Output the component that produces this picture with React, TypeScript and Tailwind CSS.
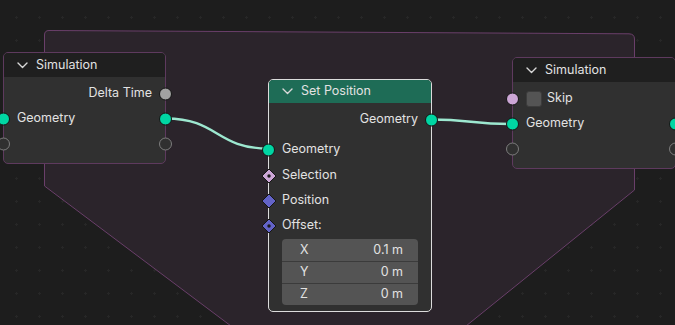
import React from 'react';

type SocketKind = 'geo' | 'float' | 'bool' | 'boolField' | 'vec' | 'vecField' | 'empty';

function Socket({ kind, side }: { kind: SocketKind; side: 'left' | 'right' }) {
    const pos = side === 'left' ? 'left-[-7px]' : 'right-[-7px]';
    if (kind === 'empty') {
        return <span className={`absolute ${pos} top-1/2 -translate-y-1/2 w-[13px] h-[13px] rounded-full border-[1.5px] border-[#7d7d7d] bg-[#303030]`} />;
    }
    if (kind === 'geo') {
        return <span className={`absolute ${pos} top-1/2 -translate-y-1/2 w-[13px] h-[13px] rounded-full border border-[#151515] bg-[#00d6a3]`} />;
    }
    if (kind === 'float') {
        return <span className={`absolute ${pos} top-1/2 -translate-y-1/2 w-[13px] h-[13px] rounded-full border border-[#151515] bg-[#a1a1a1]`} />;
    }
    if (kind === 'bool') {
        return <span className={`absolute ${pos} top-1/2 -translate-y-1/2 w-[13px] h-[13px] rounded-full border border-[#151515] bg-[#cca6d6]`} />;
    }
    const fill = kind === 'boolField' ? '#cca6d6' : '#6363c7';
    const dot = kind === 'boolField' || kind === 'vecField';
    return (
        <svg className={`absolute ${side === 'left' ? 'left-[-8px]' : 'right-[-8px]'} top-1/2 -translate-y-1/2`} width="16" height="16" viewBox="0 0 16 16">
            <path d="M8 1 L15 8 L8 15 L1 8 Z" fill={fill} stroke="#151515" strokeWidth="1" />
            {dot && <circle cx="8" cy="8" r="1.7" fill="#1a1a1a" />}
        </svg>
    );
}

function Row({ children, left, right, align = 'left' }: { children?: React.ReactNode; left?: SocketKind; right?: SocketKind; align?: 'left' | 'right' }) {
    return (
        <div className={`relative h-[25px] flex items-center px-[13px] ${align === 'right' ? 'justify-end' : 'justify-start'}`}>
            {left && <Socket kind={left} side="left" />}
            {children}
            {right && <Socket kind={right} side="right" />}
        </div>
    );
}

function Chevron() {
    return (
        <svg width="11" height="7" viewBox="0 0 11 7" className="mr-[8px]">
            <path d="M1 1 L5.5 5.5 L10 1" fill="none" stroke="#d8d8d8" strokeWidth="1.4" strokeLinecap="round" strokeLinejoin="round" />
        </svg>
    );
}

function Header({ title, className }: { title: string; className: string }) {
    return (
        <div className={`flex items-center pl-[13px] text-[12.5px] text-[#e2e2e2] ${className}`}>
            <Chevron />
            <span>{title}</span>
        </div>
    );
}

export default function App() {
    return (
        <div
            className="relative w-[675px] h-[325px] overflow-hidden bg-[#1d1d1d] bg-[radial-gradient(circle,#272727_1px,transparent_1.3px)] bg-[size:23px_23px] bg-[position:5px_6px] text-[12.5px] text-[#e2e2e2]"
            style={{ fontFamily: 'Inter, "Noto Sans", sans-serif' }}
        >
            {/* simulation zone */}
            <svg className="absolute inset-0" width="675" height="325" viewBox="0 0 675 325">
                <path
                    d="M44.5 186 L44.5 35 Q44.5 30.5 49 30.5 L629 33.8 Q634.5 34 634.5 39 L634.5 190 L466 326 L231 326 Z"
                    fill="#2b242b"
                    stroke="#6a3f6a"
                    strokeWidth="1"
                />
            </svg>

            {/* links */}
            <svg className="absolute inset-0" width="675" height="325" viewBox="0 0 675 325">
                <path d="M166 118.5 C 218 118.5, 216 148.5, 268 148.5" fill="none" stroke="#9de8d0" strokeWidth="2.4" />
                <path d="M431 119.5 C 470 119.5, 472 124, 512 124" fill="none" stroke="#9de8d0" strokeWidth="2.4" />
            </svg>

            {/* Simulation input */}
            <div className="absolute left-[3px] top-[52px] w-[163px] rounded-[5px] border border-[#5e3a5e] bg-[#303030]">
                <Header title="Simulation" className="h-[24px] bg-[#1f1f1f] rounded-t-[4px]" />
                <div className="pt-[4px] pb-[7px]">
                    <Row right="float" align="right">Delta Time</Row>
                    <Row left="geo" right="geo">Geometry</Row>
                    <Row left="empty" right="empty" />
                </div>
            </div>

            {/* Set Position */}
            <div className="absolute left-[268px] top-[79px] w-[164px] rounded-[5px] border border-[#dcdcdc] bg-[#303030]">
                <Header title="Set Position" className="h-[23px] bg-[#1e6c56] rounded-t-[4px]" />
                <div className="pt-[4px] pb-[6px]">
                    <Row right="geo" align="right">Geometry</Row>
                    <div className="h-[5px]" />
                    <Row left="geo">Geometry</Row>
                    <div className="h-[1px]" />
                    <Row left="boolField">Selection</Row>
                    <Row left="vec">Position</Row>
                    <Row left="vecField">Offset:</Row>
                    <div className="px-[13px] pt-[1px]">
                        <div className="flex flex-col rounded-[4px] bg-[#545454] overflow-hidden">
                            {[
                                ['X', '0.1 m'],
                                ['Y', '0 m'],
                                ['Z', '0 m'],
                            ].map(([k, v], i) => (
                                <div key={k} className={`h-[22px] flex items-center justify-between pl-[18px] pr-[15px] ${i > 0 ? 'border-t border-[#3b3b3b]' : ''}`}>
                                    <span>{k}</span>
                                    <span>{v}</span>
                                </div>
                            ))}
                        </div>
                    </div>
                </div>
            </div>

            {/* Simulation output */}
            <div className="absolute left-[512px] top-[57px] w-[164px] rounded-[5px] border border-[#5e3a5e] bg-[#303030]">
                <Header title="Simulation" className="h-[24px] bg-[#1f1f1f] rounded-t-[4px]" />
                <div className="pt-[4px] pb-[7px]">
                    <Row left="bool">
                        <span className="w-[16px] h-[16px] rounded-[3px] bg-[#545454] border border-[#3c3c3c] mr-[5px]" />
                        Skip
                    </Row>
                    <Row left="geo" right="geo">Geometry</Row>
                    <Row left="empty" right="empty" />
                </div>
            </div>
        </div>
    );
}
